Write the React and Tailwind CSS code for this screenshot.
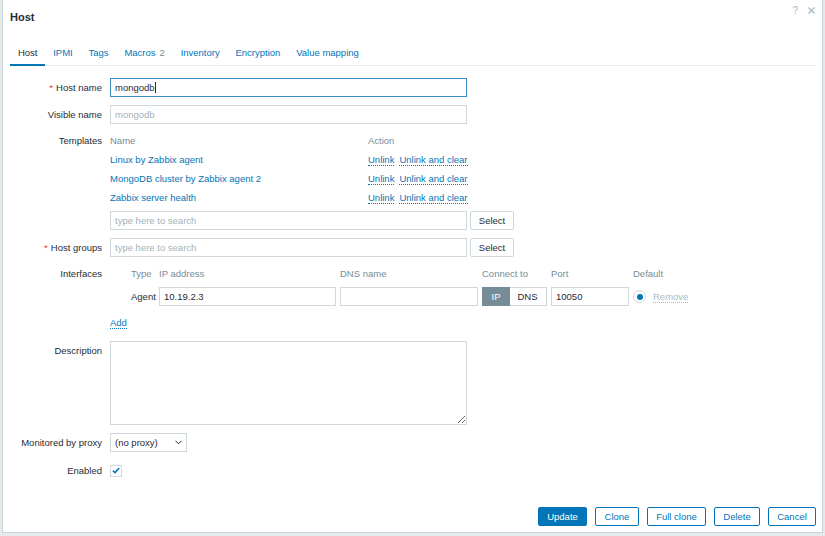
import React from "react";

const templates = [
  "Linux by Zabbix agent",
  "MongoDB cluster by Zabbix agent 2",
  "Zabbix server health",
];

const tabs = ["Host", "IPMI", "Tags", "Macros", "Inventory", "Encryption", "Value mapping"];

function Label({ children, required, className = "" }) {
  return (
    <div className={`w-[92px] shrink-0 text-right text-[#1f2c33] ${className}`}>
      {required && <span className="text-[#e33734] mr-[3px]">*</span>}
      {children}
    </div>
  );
}

function Dotted({ children, gray }) {
  return (
    <span
      className={`border-b border-dotted leading-[11px] ${
        gray ? "text-[#acbbc2] border-[#acbbc2]" : "text-[#0275b8] border-[#0275b8]"
      }`}
    >
      {children}
    </span>
  );
}

function SelectBtn() {
  return (
    <button className="ml-[3px] w-[44px] h-[19px] border border-[#cfd8dc] rounded-[2px] bg-white text-[#1f2c33]">
      Select
    </button>
  );
}

export default function App() {
  return (
    <div
      className="w-[825px] h-[536px] bg-[#e6eaec] pl-[2px] overflow-hidden text-[9.5px] leading-[12px]"
      style={{ fontFamily: '"Liberation Sans", Arial, sans-serif' }}
    >
      <div className="w-[821px] h-[533px] bg-white border-l border-r border-b border-[#c9d2d6] pl-[7px] pr-[6px] flex flex-col">
        {/* header */}
        <div className="h-[33px] flex items-center justify-between">
          <h4 className="text-[11px] font-bold text-[#1f2c33]">Host</h4>
          <div className="flex items-center gap-[10px] text-[#acbbc2] mb-[12px] mr-[1px]">
            <span className="text-[10px]">?</span>
            <svg width="7" height="7" viewBox="0 0 7 7">
              <path d="M0.5 0.5 L6.5 6.5 M6.5 0.5 L0.5 6.5" stroke="#acbbc2" strokeWidth="1.3" />
            </svg>
          </div>
        </div>

        {/* tabs */}
        <div className="mt-[8px] h-[25px] flex border-b border-[#e6eaec]">
          {tabs.map((t, i) => (
            <div
              key={t}
              className={`h-[25px] px-[7.9px] flex items-center ${
                i === 0 ? "text-[#1f2c33] border-b-[2px] border-[#0275b8]" : "text-[#0275b8] pb-[2px]"
              }`}
            >
              {t}
              {t === "Macros" && <span className="ml-[4px] text-[#768d99]">2</span>}
            </div>
          ))}
        </div>

        {/* form */}
        <div className="mt-[12px]">
          <div className="flex items-center">
            <Label required>Host name</Label>
            <div className="ml-[8px] w-[357px] h-[19px] border border-[#3b8dc4] px-[4px] flex items-center text-[#1f2c33]">
              mongodb<span className="w-px h-[11px] bg-[#1f2c33]" />
            </div>
          </div>

          <div className="flex items-center mt-[8px]">
            <Label>Visible name</Label>
            <div className="ml-[8px] w-[357px] h-[19px] border border-[#cfd8dc] px-[4px] flex items-center text-[#a3b1b8]">
              mongodb
            </div>
          </div>

          <div className="flex mt-[8px]">
            <Label className="h-[18px] leading-[18px]">Templates</Label>
            <div className="ml-[8px]">
              <div className="flex h-[18px] items-center text-[#768d99]">
                <div className="w-[258px]">Name</div>
                <div>Action</div>
              </div>
              {templates.map((t) => (
                <div key={t} className="flex h-[19px] items-center">
                  <div className="w-[258px] text-[#0275b8]">{t}</div>
                  <div className="flex gap-[5px]">
                    <Dotted>Unlink</Dotted>
                    <Dotted>Unlink and clear</Dotted>
                  </div>
                </div>
              ))}
              <div className="flex items-center mt-[4px]">
                <div className="w-[357px] h-[19px] border border-[#cfd8dc] px-[4px] flex items-center text-[#a3b1b8]">
                  type here to search
                </div>
                <SelectBtn />
              </div>
            </div>
          </div>

          <div className="flex items-center mt-[8px]">
            <Label required>Host groups</Label>
            <div className="ml-[8px] flex items-center">
              <div className="w-[357px] h-[19px] border border-[#cfd8dc] px-[4px] flex items-center text-[#a3b1b8]">
                type here to search
              </div>
              <SelectBtn />
            </div>
          </div>

          <div className="flex mt-[8px]">
            <Label className="h-[18px] leading-[18px]">Interfaces</Label>
            <div className="ml-[8px] pl-[21px]">
              <div className="flex h-[18px] items-center text-[#768d99]">
                <div className="w-[28px]">Type</div>
                <div className="w-[181px]">IP address</div>
                <div className="w-[142px]">DNS name</div>
                <div className="w-[69px]">Connect to</div>
                <div className="w-[82px]">Port</div>
                <div>Default</div>
              </div>
              <div className="flex items-center mt-[4px] h-[19px]">
                <div className="w-[28px] text-[#1f2c33]">Agent</div>
                <div className="w-[177px] h-[19px] border border-[#cfd8dc] px-[4px] flex items-center text-[#1f2c33]">
                  10.19.2.3
                </div>
                <div className="ml-[4px] w-[138px] h-[19px] border border-[#cfd8dc]" />
                <div className="ml-[4px] w-[65px] h-[19px] flex border border-[#cfd8dc]">
                  <div className="w-[28px] -m-px h-[19px] bg-[#768d99] text-white flex items-center justify-center">
                    IP
                  </div>
                  <div className="flex-1 flex items-center justify-center text-[#1f2c33]">DNS</div>
                </div>
                <div className="ml-[4px] w-[78px] h-[19px] border border-[#cfd8dc] px-[4px] flex items-center text-[#1f2c33]">
                  10050
                </div>
                <div className="ml-[4px] w-[13px] h-[13px] rounded-full border border-[#cfd8dc] flex items-center justify-center">
                  <div className="w-[6px] h-[6px] rounded-full bg-[#0275b8]" />
                </div>
                <div className="ml-[7px]">
                  <Dotted gray>Remove</Dotted>
                </div>
              </div>
            </div>
          </div>

          <div className="flex items-center mt-[8px] h-[18px]">
            <div className="w-[92px] shrink-0" />
            <div className="ml-[8px]">
              <Dotted>Add</Dotted>
            </div>
          </div>

          <div className="flex mt-[9px]">
            <Label className="pt-[4px]">Description</Label>
            <textarea
              className="ml-[8px] w-[357px] h-[84px] border border-[#cfd8dc] outline-none"
              defaultValue=""
            />
          </div>

          <div className="flex items-center mt-[8px]">
            <Label>Monitored by proxy</Label>
            <div className="ml-[8px] w-[77px] h-[19px] border border-[#cfd8dc] pl-[4px] pr-[4px] flex items-center justify-between text-[#1f2c33]">
              <span>(no proxy)</span>
              <svg width="7" height="5" viewBox="0 0 7 5">
                <path d="M0.5 0.8 L3.5 3.8 L6.5 0.8" fill="none" stroke="#1f2c33" strokeWidth="1" />
              </svg>
            </div>
          </div>

          <div className="flex items-center mt-[9px] h-[19px]">
            <Label>Enabled</Label>
            <div className="ml-[8px] w-[12px] h-[12px] border border-[#cfd8dc] flex items-center justify-center">
              <svg width="8" height="7" viewBox="0 0 8 7">
                <path d="M0.8 3.6 L3 5.6 L7.2 1" fill="none" stroke="#0275b8" strokeWidth="1.5" />
              </svg>
            </div>
          </div>
        </div>

        {/* footer */}
        <div className="mt-auto pb-[6px] flex justify-end gap-[8px]">
          <button className="w-[49px] h-[19px] bg-[#0275b8] border border-[#0275b8] rounded-[2px] text-white">
            Update
          </button>
          <button className="w-[44px] h-[19px] bg-white border border-[#0275b8] rounded-[2px] text-[#0275b8]">
            Clone
          </button>
          <button className="w-[59px] h-[19px] bg-white border border-[#0275b8] rounded-[2px] text-[#0275b8]">
            Full clone
          </button>
          <button className="w-[46px] h-[19px] bg-white border border-[#0275b8] rounded-[2px] text-[#0275b8]">
            Delete
          </button>
          <button className="w-[48px] h-[19px] bg-white border border-[#0275b8] rounded-[2px] text-[#0275b8]">
            Cancel
          </button>
        </div>
      </div>
    </div>
  );
}
